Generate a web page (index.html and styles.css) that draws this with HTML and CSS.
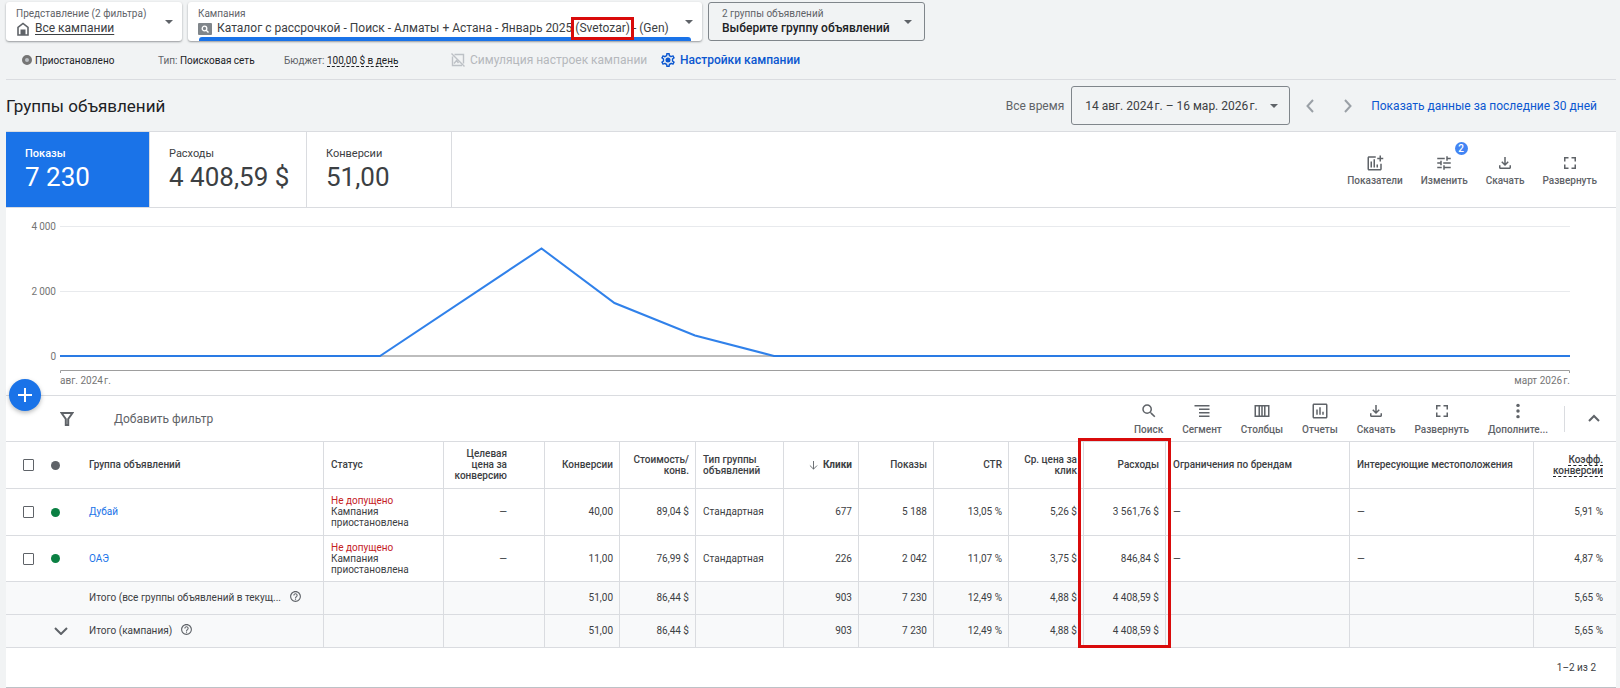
FILE: index.html
```html
<!DOCTYPE html>
<html lang="ru">

<head>
    <meta charset="UTF-8">
    <meta name="viewport" content="width=device-width, initial-scale=1.0">
    <title>Группы объявлений</title>
    <link rel="stylesheet" href="styles.css">
</head>

<body>
    <svg class="sprite" aria-hidden="true">
        <symbol id="i-download" viewBox="0 0 24 24"><path d="M18 15v3H6v-3H4v3c0 1.1.9 2 2 2h12c1.1 0 2-.9 2-2v-3h-2zm-1-4l-1.41-1.41L13 12.17V4h-2v8.17L8.41 9.59 7 11l5 5 5-5z"/></symbol>
        <symbol id="i-expand" viewBox="0 0 24 24"><path d="M6 14H4v6h6v-2H6v-4zM4 10h2V6h4V4H4v6zm14 8h-4v2h6v-6h-2v4zM14 4v2h4v4h2V4h-6z"/></symbol>
        <symbol id="i-arrow" viewBox="0 0 10 5"><path d="M0 0h10L5 5z"/></symbol>
        <symbol id="i-help" viewBox="0 0 24 24"><path d="M11 18h2v-2h-2v2zm1-16C6.48 2 2 6.48 2 12s4.48 10 10 10 10-4.48 10-10S17.52 2 12 2zm0 18c-4.41 0-8-3.59-8-8s3.59-8 8-8 8 3.59 8 8-3.59 8-8 8zm0-14c-2.21 0-4 1.79-4 4h2c0-1.1.9-2 2-2s2 .9 2 2c0 2-3 1.75-3 5h2c0-2.25 3-2.5 3-5 0-2.21-1.79-4-4-4z"/></symbol>
    </svg>

    <header>
        <div class="pickers">
            <button class="picker picker-view" type="button">
                <span class="picker-text">
                    <span class="picker-label">Представление (2 фильтра)</span>
                    <span class="picker-value">
                        <svg class="home" viewBox="0 0 14 14"><path d="M2 13V5.5L7 1.5l5 4V13z" fill="#fff" stroke="#5f6368" stroke-width="1.6"/><path d="M4.5 7.5h5V13h-5z" fill="#5f6368"/></svg>
                        <span class="underlined">Все кампании</span>
                    </span>
                </span>
                <svg class="arrow"><use href="#i-arrow"/></svg>
            </button>
            <button class="picker picker-campaign" type="button">
                <span class="picker-text">
                    <span class="picker-label">Кампания</span>
                    <span class="picker-value">
                        <svg class="search-type" viewBox="0 0 14 12"><rect width="14" height="12" rx="1" fill="#80868b"/><circle cx="6.5" cy="5.5" r="2.3" fill="none" stroke="#fff" stroke-width="1.3"/><path d="M8.2 7.2l2.3 2.3" stroke="#fff" stroke-width="1.4"/></svg>
                        <span>Каталог с рассрочкой - Поиск - Алматы + Астана - Январь 2025 <span class="mark">(Svetozar)</span> - (Gen)</span>
                    </span>
                </span>
                <svg class="arrow"><use href="#i-arrow"/></svg>
            </button>
            <button class="picker picker-group" type="button">
                <span class="picker-text">
                    <span class="picker-label">2 группы объявлений</span>
                    <span class="picker-value strong">Выберите группу объявлений</span>
                </span>
                <svg class="arrow"><use href="#i-arrow"/></svg>
            </button>
        </div>

        <div class="info">
            <span class="info-status"><span class="paused"></span>Приостановлено</span>
            <span class="info-type"><span class="muted">Тип:</span> Поисковая сеть</span>
            <span class="info-budget"><span class="muted">Бюджет:</span> <span class="dashed">100,00 $ в день</span></span>
            <button class="info-button simulation" type="button" disabled>
                <svg viewBox="0 0 14 14" fill="none" stroke="#bdc1c6" stroke-width="1.4"><path d="M3.5 1.5h9v9M1.5 3.5v9H11M.5.5l13 13M3 10.5l2.5-3 2 2.500"/></svg>
                Симуляция настроек кампании
            </button>
            <button class="info-button settings" type="button">
                <svg viewBox="2 2 20 20"><path fill="#0b57d0" d="M19.43 12.98c.04-.32.07-.64.07-.98 0-.34-.03-.66-.07-.98l2.11-1.65c.19-.15.24-.42.12-.64l-2-3.46a.5.5 0 0 0-.61-.22l-2.49 1c-.52-.4-1.08-.73-1.69-.98l-.38-2.65A.488.488 0 0 0 14 2h-4c-.25 0-.46.18-.49.42l-.38 2.65c-.61.25-1.17.59-1.69.98l-2.49-1a.566.566 0 0 0-.18-.03c-.17 0-.34.09-.43.25l-2 3.46c-.13.22-.07.49.12.64l2.11 1.65c-.04.32-.07.65-.07.98 0 .33.03.66.07.98l-2.11 1.65c-.19.15-.24.42-.12.64l2 3.46a.5.5 0 0 0 .61.22l2.49-1c.52.4 1.08.73 1.69.98l.38 2.65c.03.24.24.42.49.42h4c.25 0 .46-.18.49-.42l.38-2.65c.61-.25 1.17-.59 1.69-.98l2.49 1c.06.02.12.03.18.03.17 0 .34-.09.43-.25l2-3.46c.12-.22.07-.49-.12-.64l-2.11-1.65zm-1.98-1.71c.04.31.05.52.05.73 0 .21-.02.43-.05.73l-.14 1.13.89.7 1.08.84-.7 1.21-1.27-.51-1.04-.42-.9.68c-.43.32-.84.56-1.25.73l-1.06.43-.16 1.13-.2 1.35h-1.4l-.19-1.35-.16-1.13-1.06-.43c-.43-.18-.83-.41-1.23-.71l-.91-.7-1.06.43-1.27.51-.7-1.21 1.08-.84.89-.7-.14-1.13c-.03-.31-.05-.54-.05-.74s.02-.43.05-.73l.14-1.13-.89-.7-1.08-.84.7-1.21 1.27.51 1.04.42.9-.68c.43-.32.84-.56 1.25-.73l1.06-.43.16-1.13.2-1.35h1.39l.19 1.35.16 1.13 1.06.43c.43.18.83.41 1.23.71l.91.7 1.06-.43 1.27-.51.7 1.21-1.07.85-.89.7.14 1.13z"/><circle cx="12" cy="12" r="3.6" fill="#0b57d0"/></svg>
                Настройки кампании
            </button>
        </div>

        <div class="title-row">
            <h1>Группы объявлений</h1>
            <div class="dates">
                <span class="muted">Все время</span>
                <button class="date-picker" type="button">
                    14 авг. 2024&#8202;г. – 16 мар. 2026&#8202;г.
                    <svg class="arrow"><use href="#i-arrow"/></svg>
                </button>
                <button class="step" type="button" aria-label="Назад"><svg viewBox="0 0 8 14"><path d="M7 1L1.5 7 7 13"/></svg></button>
                <button class="step" type="button" aria-label="Вперед"><svg viewBox="0 0 8 14"><path d="M1 1l5.5 6L1 13"/></svg></button>
                <a class="last-days" href="#">Показать данные за последние 30 дней</a>
            </div>
        </div>
    </header>

    <main>
        <section class="metrics">
            <button class="metric metric-first active" type="button">
                <span class="metric-name">Показы</span>
                <span class="metric-value">7 230</span>
            </button>
            <button class="metric metric-cost" type="button">
                <span class="metric-name">Расходы</span>
                <span class="metric-value">4 408,59 $</span>
            </button>
            <button class="metric metric-conv" type="button">
                <span class="metric-name">Конверсии</span>
                <span class="metric-value">51,00</span>
            </button>
            <div class="tools chart-tools">
                <button class="tool" type="button">
                    <svg viewBox="0 0 24 24"><path d="M19 13v7H4V5h9V3H4c-1.1 0-2 .9-2 2v15c0 1.1.9 2 2 2h15c1.1 0 2-.9 2-2v-7h-2zM6 10h2v8H6zM10 7h2v11h-2zM14 14h2v4h-2zM18 2h2v3h3v2h-3v3h-2V7h-3V5h3z"/></svg>
                    Показатели
                </button>
                <button class="tool" type="button">
                    <svg viewBox="0 0 24 24"><path d="M3 17v2h6v-2H3zM3 5v2h10V5H3zm10 16v-2h8v-2h-8v-2h-2v6h2zM7 9v2H3v2h4v2h2V9H7zm14 4v-2H11v2h10zm-6-4h2V7h4V5h-4V3h-2v6z"/></svg>
                    Изменить
                    <span class="badge">2</span>
                </button>
                <button class="tool" type="button"><svg><use href="#i-download"/></svg>Скачать</button>
                <button class="tool" type="button"><svg><use href="#i-expand"/></svg>Развернуть</button>
            </div>
        </section>

        <section class="chart">
            <div class="y-axis">
                <span>4&#8201;000</span>
                <span>2&#8201;000</span>
                <span>0</span>
            </div>
            <div class="plot">
                <svg viewBox="0 0 1510 146" preserveAspectRatio="none">
                    <path class="grid" d="M0 .5h1510M0 65.5h1510"/>
                    <path class="zero" d="M0 130h1510"/>
                    <path class="series" d="M0 130H320L481.5 22.5 554.5 77 635 109.5 714 130H1510"/>
                    <path class="range" d="M.5 147v-2.5h1509v2.5"/>
                </svg>
                <div class="x-axis">
                    <span>авг. 2024&#8202;г.</span>
                    <span>март 2026&#8202;г.</span>
                </div>
            </div>
            <button class="fab" type="button" aria-label="Создать группу объявлений">
                <svg viewBox="0 0 14 14"><path d="M7 0v14M0 7h14"/></svg>
            </button>
        </section>

        <section class="toolbar">
            <svg class="filter" viewBox="0 0 14 14"><path d="M1.5 1h11L8.2 7v6H5.8V7z"/></svg>
            <button class="add-filter" type="button">Добавить фильтр</button>
            <div class="tools table-tools">
                <button class="tool" type="button">
                    <svg viewBox="0 0 24 24"><path d="M15.5 14h-.79l-.28-.27A6.471 6.471 0 0 0 16 9.5 6.5 6.5 0 1 0 9.5 16c1.61 0 3.09-.59 4.23-1.57l.27.28v.79l5 4.99L20.49 19l-4.99-5zm-6 0C7.01 14 5 11.99 5 9.5S7.01 5 9.5 5 14 7.01 14 9.5 11.99 14 9.5 14z"/></svg>
                    Поиск
                </button>
                <button class="tool" type="button">
                    <svg viewBox="0 0 24 24"><path d="M2 4h20v2H2zM8 8.7h14v2H8zM8 13.3h14v2H8zM8 18h14v2H8z"/></svg>
                    Сегмент
                </button>
                <button class="tool" type="button">
                    <svg viewBox="0 0 24 24"><path fill-rule="evenodd" d="M2 4h20v16H2zM4 6v12h3.3V6zM9.3 6v12H11V6zM13 6v12h1.7V6zM16.7 6v12H20V6z"/></svg>
                    Столбцы
                </button>
                <button class="tool" type="button">
                    <svg viewBox="0 0 24 24"><path fill-rule="evenodd" d="M4 2h16c1.1 0 2 .9 2 2v16c0 1.1-.9 2-2 2H4c-1.1 0-2-.9-2-2V4c0-1.1.9-2 2-2zM4 4v16h16V4zM7 10h2v7H7zM11 7h2v10h-2zM15 13h2v4h-2z"/></svg>
                    Отчеты
                </button>
                <button class="tool" type="button"><svg><use href="#i-download"/></svg>Скачать</button>
                <button class="tool" type="button"><svg><use href="#i-expand"/></svg>Развернуть</button>
                <button class="tool" type="button">
                    <svg viewBox="0 0 24 24"><circle cx="12" cy="4.5" r="2.3"/><circle cx="12" cy="12" r="2.3"/><circle cx="12" cy="19.5" r="2.3"/></svg>
                    Дополните...
                </button>
            </div>
            <button class="collapse" type="button" aria-label="Свернуть"><svg viewBox="0 0 12 8"><path d="M1 7l5-5 5 5"/></svg></button>
        </section>

        <table>
            <colgroup>
                <col class="c-check">
                <col class="c-dot">
                <col class="c-name">
                <col class="c-status">
                <col class="c-target">
                <col class="c-num">
                <col class="c-cpa">
                <col class="c-type">
                <col class="c-num">
                <col class="c-num">
                <col class="c-num">
                <col class="c-num">
                <col class="c-cost">
                <col>
                <col>
                <col class="c-cost">
            </colgroup>
            <thead>
                <tr>
                    <th class="check"><input type="checkbox" aria-label="Выбрать все"></th>
                    <th class="state"><span class="dot"></span></th>
                    <th class="line">Группа объявлений</th>
                    <th class="line">Статус</th>
                    <th class="line num target">Целевая цена за конверсию</th>
                    <th class="line num">Конверсии</th>
                    <th class="line num">Стоимость/<br>конв.</th>
                    <th class="line">Тип группы объявлений</th>
                    <th class="line num sorted"><svg viewBox="0 0 10 10"><path d="M5 0v9M1 5l4 4 4-4"/></svg>Клики</th>
                    <th class="line num">Показы</th>
                    <th class="line num">CTR</th>
                    <th class="line num cpc">Ср. цена за клик</th>
                    <th class="line num marked">Расходы</th>
                    <th class="line">Ограничения по брендам</th>
                    <th class="line">Интересующие местоположения</th>
                    <th class="num last"><span class="dashed">Коэфф. конверсии</span></th>
                </tr>
            </thead>
            <tbody>
                <tr>
                    <td class="check"><input type="checkbox" aria-label="Дубай"></td>
                    <td class="state"><span class="dot on"></span></td>
                    <td class="line"><a href="#">Дубай</a></td>
                    <td class="line"><span class="denied">Не допущено</span><br>Кампания приостановлена</td>
                    <td class="line num target">—</td>
                    <td class="line num">40,00</td>
                    <td class="line num">89,04 $</td>
                    <td class="line">Стандартная</td>
                    <td class="line num">677</td>
                    <td class="line num">5 188</td>
                    <td class="line num">13,05 %</td>
                    <td class="line num">5,26 $</td>
                    <td class="line num">3 561,76 $</td>
                    <td class="line">—</td>
                    <td class="line">—</td>
                    <td class="num last">5,91 %</td>
                </tr>
                <tr class="last-row">
                    <td class="check"><input type="checkbox" aria-label="ОАЭ"></td>
                    <td class="state"><span class="dot on"></span></td>
                    <td class="line"><a href="#">ОАЭ</a></td>
                    <td class="line"><span class="denied">Не допущено</span><br>Кампания приостановлена</td>
                    <td class="line num target">—</td>
                    <td class="line num">11,00</td>
                    <td class="line num">76,99 $</td>
                    <td class="line">Стандартная</td>
                    <td class="line num">226</td>
                    <td class="line num">2 042</td>
                    <td class="line num">11,07 %</td>
                    <td class="line num">3,75 $</td>
                    <td class="line num">846,84 $</td>
                    <td class="line">—</td>
                    <td class="line">—</td>
                    <td class="num last">4,87 %</td>
                </tr>
            </tbody>
            <tfoot>
                <tr>
                    <td></td>
                    <td></td>
                    <td class="line"><span class="total">Итого (все группы объявлений в текущ...<svg><use href="#i-help"/></svg></span></td>
                    <td class="line"></td>
                    <td class="line"></td>
                    <td class="line num">51,00</td>
                    <td class="line num">86,44 $</td>
                    <td class="line"></td>
                    <td class="line num">903</td>
                    <td class="line num">7 230</td>
                    <td class="line num">12,49 %</td>
                    <td class="line num">4,88 $</td>
                    <td class="line num">4 408,59 $</td>
                    <td class="line"></td>
                    <td class="line"></td>
                    <td class="num last">5,65 %</td>
                </tr>
                <tr>
                    <td></td>
                    <td class="state"><button class="unfold" type="button" aria-label="Показать итоги"><svg viewBox="0 0 14 8"><path d="M1 1l6 6 6-6"/></svg></button></td>
                    <td class="line"><span class="total">Итого (кампания)<svg><use href="#i-help"/></svg></span></td>
                    <td class="line"></td>
                    <td class="line"></td>
                    <td class="line num">51,00</td>
                    <td class="line num">86,44 $</td>
                    <td class="line"></td>
                    <td class="line num">903</td>
                    <td class="line num">7 230</td>
                    <td class="line num">12,49 %</td>
                    <td class="line num">4,88 $</td>
                    <td class="line num">4 408,59 $</td>
                    <td class="line"></td>
                    <td class="line"></td>
                    <td class="num last">5,65 %</td>
                </tr>
            </tfoot>
        </table>

        <div class="pager">1–2 из 2</div>
    </main>
</body>

</html>
```

FILE: styles.css
```css
*,
*::after {
    box-sizing: border-box;
}

body {
    margin: 0;
    padding: 2px 4px 0 6px;
    background-color: #f1f3f4;
    color: #3c4043;
    font-family: Roboto, "Liberation Sans", sans-serif;
    font-size: 10px;
}

button {
    margin: 0;
    padding: 0;
    border: 0;
    background: none;
    color: inherit;
    font: inherit;
    text-align: left;
    cursor: pointer;
}

a {
    color: #1a73e8;
    text-decoration: none;
}

.sprite {
    display: none;
}

.muted {
    color: #5f6368;
}

.dashed {
    border-bottom: 1px dashed #202124;
}

.arrow {
    width: 8px;
    height: 4px;
    fill: #5f6368;
}

/* pickers */
.pickers {
    display: flex;
    gap: 6px;
}

.picker {
    position: relative;
    display: flex;
    align-items: center;
    justify-content: space-between;
    height: 39px;
    padding: 0 9px 0 10px;
    border-radius: 3px;
    background-color: #fff;
    box-shadow: 0 1px 2px rgba(60, 64, 67, 0.5);
}

.picker-view {
    width: 176px;
}

.picker-campaign {
    width: 514px;
}

.picker-campaign::after {
    content: "";
    position: absolute;
    left: 11px;
    right: 11px;
    bottom: 0;
    height: 4px;
    border-radius: 3px 3px 0 0;
    background-color: #1a73e8;
}

.picker-group {
    width: 217px;
    padding: 0 12px 0 13px;
    border: 1px solid #80868b;
    background-color: transparent;
    box-shadow: none;
}

.picker-text {
    display: flex;
    flex-direction: column;
}

.picker-label {
    color: #5f6368;
    font-size: 10px;
    line-height: 14px;
}

.picker-value {
    display: flex;
    align-items: center;
    gap: 5px;
    font-size: 12px;
    line-height: 15px;
    white-space: nowrap;
}

.strong {
    color: #202124;
    font-weight: 500;
}

.underlined {
    text-decoration: underline;
    text-underline-offset: 2px;
}

.home {
    width: 14px;
    height: 14px;
}

.search-type {
    width: 14px;
    height: 12px;
}

.mark {
    position: relative;
}

.mark::after {
    content: "";
    position: absolute;
    z-index: 1;
    inset: -4px -4px -5px;
    border: 3px solid #d90b0b;
}

/* campaign info */
.info {
    display: flex;
    align-items: center;
    height: 39px;
    padding-left: 16px;
    border-bottom: 1px solid #dadce0;
    color: #202124;
    font-size: 10px;
}

.info-status {
    display: flex;
    align-items: center;
    gap: 3px;
    width: 136px;
}

.paused {
    width: 10px;
    height: 10px;
    border: 3px solid #757575;
    border-radius: 50%;
    background-color: #bdc1c6;
}

.info-type {
    width: 126px;
}

.info-budget {
    width: 167px;
}

.info-button {
    display: flex;
    align-items: center;
    gap: 5px;
    font-size: 12px;
}

.info-button svg {
    width: 14px;
    height: 14px;
}

.simulation {
    width: 210px;
    color: #b5b8bc;
}

.settings {
    color: #0b57d0;
    font-weight: 500;
}

/* title and dates */
.title-row {
    display: flex;
    align-items: center;
    justify-content: space-between;
    height: 52px;
    border-bottom: 1px solid #dadce0;
}

h1 {
    margin: 0;
    color: #202124;
    font-size: 17px;
    font-weight: 400;
}

.dates {
    display: flex;
    align-items: center;
    padding-right: 19px;
    font-size: 12px;
}

.date-picker {
    display: flex;
    align-items: center;
    justify-content: space-between;
    width: 219px;
    height: 39px;
    margin: 0 1px 0 7px;
    padding: 0 11px 0 13px;
    border: 1px solid #80868b;
    border-radius: 3px;
}

.step {
    width: 38px;
    text-align: center;
}

.step svg {
    width: 8px;
    height: 14px;
    fill: none;
    stroke: #9aa0a6;
    stroke-width: 2;
    vertical-align: middle;
}

.last-days {
    padding-left: 4px;
    color: #0b57d0;
}

/* metrics */
main {
    background-color: #fff;
    border-bottom: 1px solid #bdc1c6;
}

.metrics {
    display: flex;
    height: 76px;
    border-bottom: 1px solid #dadce0;
}

.metric {
    display: flex;
    flex-direction: column;
    padding: 15px 0 0 19px;
    border-right: 1px solid #dadce0;
}

.metric-first {
    width: 144px;
}

.metric-cost {
    width: 157px;
}

.metric-conv {
    width: 145px;
}

.active {
    background-color: #1a73e8;
    color: #fff;
}

.active .metric-name {
    font-weight: 500;
}

.metric-name {
    font-size: 11px;
    line-height: 14px;
}

.metric-value {
    font-size: 26px;
    line-height: 32px;
}

.tools {
    display: flex;
    gap: 18px;
    margin-left: auto;
}

.tool {
    position: relative;
    display: flex;
    flex-direction: column;
    align-items: center;
    gap: 3px;
    color: #5f6368;
    font-size: 10px;
    font-weight: 500;
    line-height: 12px;
}

.tool svg {
    width: 18px;
    height: 18px;
    fill: #5f6368;
}

.chart-tools {
    padding: 22px 19px 0 0;
}

.badge {
    position: absolute;
    top: -12px;
    right: 0;
    width: 13px;
    height: 13px;
    border-radius: 50%;
    background-color: #4285f4;
    color: #fff;
    font-size: 10px;
    line-height: 13px;
    text-align: center;
}

/* chart */
.chart {
    position: relative;
    display: flex;
    gap: 4px;
    height: 188px;
    padding: 18px 46px 0 0;
    border-bottom: 1px solid #dadce0;
    color: #757575;
}

.y-axis {
    display: flex;
    flex-direction: column;
    justify-content: space-between;
    width: 50px;
    height: 142px;
    margin-top: -5px;
    line-height: 12px;
    text-align: right;
}

.plot {
    flex: 1;
}

.plot svg {
    display: block;
    width: 100%;
    height: 146px;
    overflow: visible;
    fill: none;
}

.grid {
    stroke: #e8eaed;
}

.zero {
    stroke: #bdbdbd;
    stroke-width: 2;
}

.series {
    stroke: #1a73e8;
    stroke-width: 2;
    stroke-opacity: 0.9;
}

.range {
    stroke: #9e9e9e;
}

.x-axis {
    display: flex;
    justify-content: space-between;
    margin-top: 3px;
    line-height: 12px;
}

.fab {
    position: absolute;
    left: 3px;
    bottom: -16px;
    display: flex;
    align-items: center;
    justify-content: center;
    width: 32px;
    height: 32px;
    border-radius: 50%;
    background-color: #1a73e8;
    box-shadow: 0 2px 4px rgba(60, 64, 67, 0.35);
}

.fab svg {
    width: 14px;
    height: 14px;
    stroke: #fff;
    stroke-width: 2;
}

/* table toolbar */
.toolbar {
    display: flex;
    align-items: center;
    height: 46px;
    padding-left: 54px;
    border-bottom: 1px solid #dadce0;
}

.filter {
    width: 14px;
    height: 14px;
    fill: none;
    stroke: #5f6368;
    stroke-width: 2;
}

.add-filter {
    margin-left: 40px;
    color: #5f6368;
    font-size: 12px;
}

.table-tools {
    gap: 19px;
    padding-right: 16px;
}

.table-tools .tool {
    gap: 4px;
}

.collapse {
    width: 52px;
    height: 26px;
    padding-left: 6px;
    border-left: 1px solid #dadce0;
    text-align: center;
}

.collapse svg {
    width: 12px;
    height: 8px;
    fill: none;
    stroke: #5f6368;
    stroke-width: 2;
}

/* table */
table {
    width: 100%;
    table-layout: fixed;
    border-spacing: 0;
    line-height: 11px;
}

.c-check {
    width: 36px;
}

.c-dot {
    width: 40px;
}

.c-name {
    width: 242px;
}

.c-status {
    width: 120px;
}

.c-target {
    width: 101px;
}

.c-num {
    width: 75px;
}

.c-cpa {
    width: 76px;
}

.c-type {
    width: 88px;
}

.c-cost {
    width: 82px;
}

th,
td {
    height: 47px;
    padding: 0 7px 1px 7px;
    border-bottom: 1px solid #dadce0;
    text-align: left;
}

th {
    font-weight: 500;
}

.last-row td {
    height: 46px;
}

.line {
    border-right: 1px solid #dadce0;
}

.num {
    padding-right: 6px;
    text-align: right;
}

.target {
    padding-left: 10px;
    padding-right: 37px;
}

.cpc {
    padding-left: 0;
}

.last {
    padding-right: 13px;
}

.check {
    padding: 0 0 0 17px;
}

.check input {
    display: block;
    appearance: none;
    width: 11px;
    height: 12px;
    margin: 0;
    border: 1px solid #5f6368;
    border-radius: 1px;
}

.state {
    padding: 0 0 0 9px;
}

.dot {
    display: block;
    width: 9px;
    height: 9px;
    border-radius: 50%;
    background-color: #5f6368;
}

.on {
    background-color: #0b8043;
}

.sorted {
    font-weight: 700;
}

.sorted svg {
    width: 9px;
    height: 9px;
    margin-right: 5px;
    fill: none;
    stroke: #5f6368;
    vertical-align: -2px;
}

/* red frame around the whole cost column */
.marked {
    position: relative;
}

.marked::after {
    content: "";
    position: absolute;
    top: -4px;
    left: -6px;
    right: -6px;
    height: 210px;
    border: 3px solid #d90b0b;
    pointer-events: none;
}

.denied {
    color: #c5221f;
}

tfoot td {
    height: 33px;
    background-color: #f8f9fa;
}

.total {
    display: flex;
    align-items: center;
    gap: 8px;
    white-space: nowrap;
}

.total svg {
    width: 13px;
    height: 13px;
    margin-bottom: 3px;
    fill: #5f6368;
}

.unfold {
    display: block;
    padding-left: 3px;
}

.unfold svg {
    display: block;
    width: 14px;
    height: 8px;
    fill: none;
    stroke: #5f6368;
    stroke-width: 2;
}

.pager {
    height: 39px;
    padding-right: 20px;
    line-height: 39px;
    text-align: right;
}
```
